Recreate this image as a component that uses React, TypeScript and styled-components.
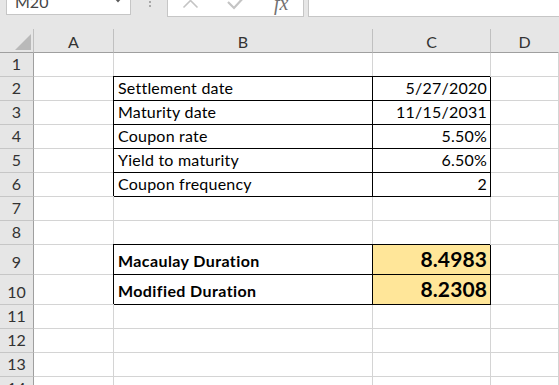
import React from "react";
import styled, { createGlobalStyle, css } from "styled-components";

const Global = createGlobalStyle`
  html, body { margin: 0; padding: 0; background: #ffffff; }
  body { width: 559px; height: 385px; overflow: hidden; font-family: "Lato", "Liberation Sans", sans-serif; }
`;

const Page = styled.div`
  width: 559px;
  height: 385px;
  overflow: hidden;
  background: #e6e6e6;
  display: flex;
  flex-direction: column;
`;

const Toolbar = styled.div`
  height: 29px;
  flex: none;
  display: flex;
  align-items: flex-start;
  background: #e6e6e6;
`;

const NameBox = styled.div`
  margin-top: -10px;
  margin-left: 6px;
  width: 125px;
  height: 25px;
  background: #fff;
  border: 1px solid #c6c6c6;
  box-sizing: border-box;
  display: flex;
  align-items: flex-end;
  padding: 0 7px 3px 8px;
  color: #444;
  font-size: 16px;
  line-height: 18px;
  position: relative;
`;

const Caret = styled.svg`
  position: absolute;
  right: 8px;
  top: 7px;
`;

const Grip = styled.div`
  margin: 0 16px 0 18px;
  display: flex;
  flex-direction: column;
  gap: 2px;
  padding-top: 1px;
`;

const GripDot = styled.span`
  width: 2px;
  height: 2px;
  background: #a8a8a8;
`;

const FxButtons = styled.div`
  margin-top: -10px;
  width: 137px;
  height: 27px;
  box-sizing: border-box;
  background: #fff;
  border: 1px solid #c6c6c6;
  position: relative;
  overflow: hidden;
`;

const FxIcon = styled.svg<{ $x: number; $y: number }>`
  position: absolute;
  left: ${(p) => p.$x}px;
  top: ${(p) => p.$y}px;
`;

const FxText = styled.span`
  position: absolute;
  left: 106px;
  top: 2px;
  font-family: "Liberation Serif", serif;
  font-style: italic;
  font-size: 20px;
  color: #727272;
  line-height: 20px;
`;

const FormulaInput = styled.div`
  margin-top: -10px;
  margin-left: 4px;
  flex: 1;
  height: 27px;
  box-sizing: border-box;
  background: #fff;
  border: 1px solid #c6c6c6;
  border-right: none;
`;

const Sheet = styled.div<{ $rows: string }>`
  display: grid;
  grid-template-columns: 34px 80px 259px 118px 1fr;
  grid-template-rows: ${(p) => p.$rows};
  background: #fff;
  flex: none;
`;

const HeaderCell = styled.div<{ $last?: boolean }>`
  background: #e6e6e6;
  border-bottom: 1px solid #9f9f9f;
  border-right: 1px solid ${(p) => (p.$last ? "transparent" : "#c0c0c0")};
  display: flex;
  align-items: center;
  justify-content: center;
  padding-top: 1px;
  font-size: 16px;
  color: #333;
  box-sizing: border-box;
`;

const Corner = styled.div`
  background: #e6e6e6;
  border-bottom: 1px solid #9f9f9f;
  border-right: 1px solid #c0c0c0;
  display: flex;
  align-items: flex-end;
  justify-content: flex-end;
  padding: 0 2px 2px 0;
  box-sizing: border-box;
`;

const RowHead = styled.div`
  background: #e6e6e6;
  border-bottom: 1px solid #c6c6c6;
  border-right: 1px solid #9f9f9f;
  display: flex;
  align-items: flex-end;
  justify-content: center;
  padding-bottom: 2px;
  font-size: 16px;
  line-height: 20px;
  color: #333;
  box-sizing: border-box;
`;

const Cell = styled.div<{ $box?: boolean; $right?: boolean; $strong?: boolean; $fill?: boolean }>`
  border-bottom: 1px solid #d4d4d4;
  border-right: 1px solid #d4d4d4;
  box-sizing: border-box;
  display: flex;
  align-items: flex-end;
  justify-content: ${(p) => (p.$right ? "flex-end" : "flex-start")};
  padding: 0 3px 2px 4px;
  font-size: 16px;
  line-height: 20px;
  letter-spacing: 0.22px;
  color: #000;
  white-space: nowrap;
  overflow: hidden;
  background: ${(p) => (p.$fill ? "#ffe699" : "#fff")};
  ${(p) =>
    p.$box &&
    css`
      border-bottom-color: #000;
      border-right-color: #000;
      box-shadow: -1px -1px 0 #000;
      overflow: visible;
    `}
  ${(p) =>
    p.$strong &&
    css`
      font-weight: 700;
      letter-spacing: 0.4px;
      padding-bottom: 3px;
    `}
`;

const BigValue = styled.span`
  font-size: 21px;
  font-weight: 700;
  letter-spacing: 0.1px;
  line-height: 24px;
`;

type Row = {
  n: number;
  h: number;
  b?: string;
  c?: string;
  box?: boolean;
  strong?: boolean;
};

const rows: Row[] = [
  { n: 1, h: 24 },
  { n: 2, h: 24, b: "Settlement date", c: "5/27/2020", box: true },
  { n: 3, h: 24, b: "Maturity date", c: "11/15/2031", box: true },
  { n: 4, h: 24, b: "Coupon rate", c: "5.50%", box: true },
  { n: 5, h: 24, b: "Yield to maturity", c: "6.50%", box: true },
  { n: 6, h: 24, b: "Coupon frequency", c: "2", box: true },
  { n: 7, h: 24 },
  { n: 8, h: 24 },
  { n: 9, h: 30, b: "Macaulay Duration", c: "8.4983", box: true, strong: true },
  { n: 10, h: 30, b: "Modified Duration", c: "8.2308", box: true, strong: true },
  { n: 11, h: 24 },
  { n: 12, h: 24 },
  { n: 13, h: 24 },
  { n: 14, h: 24 },
];

export default function App() {
  const template = ["24px", ...rows.map((r) => `${r.h}px`)].join(" ");
  return (
    <Page>
      <Global />
      <Toolbar>
        <NameBox>
          <span>M20</span>
          <Caret width="8" height="5" viewBox="0 0 8 5">
            <polygon points="0,0 8,0 4,4.5" fill="#5a5a5a" />
          </Caret>
        </NameBox>
        <Grip>
          <GripDot />
          <GripDot />
        </Grip>
        <FxButtons>
          <FxIcon $x={14} $y={1} width="17" height="17" viewBox="0 0 17 17">
            <path d="M1.5 1.5 L15.5 15.5 M15.5 1.5 L1.5 15.5" stroke="#c4c4c4" strokeWidth="1.6" fill="none" />
          </FxIcon>
          <FxIcon $x={58} $y={0} width="20" height="20" viewBox="0 0 20 20">
            <path d="M2 11 L8 17 L19 5" stroke="#c4c4c4" strokeWidth="2.2" fill="none" />
          </FxIcon>
          <FxText>fx</FxText>
        </FxButtons>
        <FormulaInput />
      </Toolbar>
      <Sheet $rows={template}>
        <Corner>
          <svg width="16" height="16" viewBox="0 0 16 16">
            <polygon points="0,16 16,16 16,0" fill="#b9b9b9" />
          </svg>
        </Corner>
        <HeaderCell>A</HeaderCell>
        <HeaderCell>B</HeaderCell>
        <HeaderCell>C</HeaderCell>
        <HeaderCell $last>D</HeaderCell>
        {rows.map((r) => (
          <React.Fragment key={r.n}>
            <RowHead>{r.n}</RowHead>
            <Cell />
            <Cell $box={r.box} $strong={r.strong}>
              {r.b}
            </Cell>
            <Cell $box={r.box} $strong={r.strong} $right $fill={r.strong}>
              {r.strong ? <BigValue>{r.c}</BigValue> : r.c}
            </Cell>
            <Cell />
          </React.Fragment>
        ))}
      </Sheet>
    </Page>
  );
}
